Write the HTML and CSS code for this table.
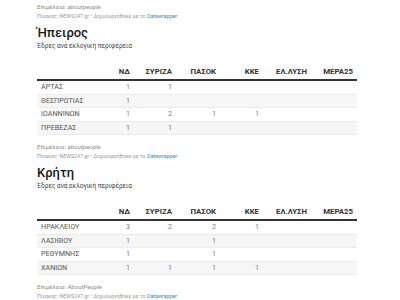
FILE: index.html
```html
<!DOCTYPE html>
<html lang="el">
<head>
<meta charset="utf-8">
<link rel="stylesheet" href="styles.css">
</head>
<body>
<div class="page">
  <div class="notes">
    <div class="byline">Επιμέλεια: aboutpeople</div>
    <div class="source">Πίνακας: NEWS247.gr • Δημιουργήθηκε με το <span class="dw">Datawrapper</span></div>
  </div>
  <div class="chart">
    <h2 class="title">Ήπειρος</h2>
    <p class="desc">Έδρες ανά εκλογική περιφέρεια</p>
    <table class="seats">
      <colgroup><col class="c-name"><col class="c-nd"><col class="c-sy"><col class="c-pa"><col class="c-kk"><col class="c-el"><col class="c-me"></colgroup>
      <thead><tr><th></th><th>ΝΔ</th><th>ΣΥΡΙΖΑ</th><th>ΠΑΣΟΚ</th><th>ΚΚΕ</th><th>ΕΛ.ΛΥΣΗ</th><th>ΜΕΡΑ25</th></tr></thead>
      <tbody>
        <tr><td>ΑΡΤΑΣ</td><td>1</td><td>1</td><td></td><td></td><td></td><td></td></tr>
        <tr><td>ΘΕΣΠΡΩΤΙΑΣ</td><td>1</td><td></td><td></td><td></td><td></td><td></td></tr>
        <tr><td>ΙΩΑΝΝΙΝΩΝ</td><td>1</td><td>2</td><td>1</td><td>1</td><td></td><td></td></tr>
        <tr><td>ΠΡΕΒΕΖΑΣ</td><td>1</td><td>1</td><td></td><td></td><td></td><td></td></tr>
      </tbody>
    </table>
  </div>
  <div class="notes">
    <div class="byline">Επιμέλεια: aboutpeople</div>
    <div class="source">Πίνακας: NEWS247.gr • Δημιουργήθηκε με το <span class="dw">Datawrapper</span></div>
  </div>
  <div class="chart">
    <h2 class="title">Κρήτη</h2>
    <p class="desc">Έδρες ανά εκλογική περιφέρεια</p>
    <table class="seats">
      <colgroup><col class="c-name"><col class="c-nd"><col class="c-sy"><col class="c-pa"><col class="c-kk"><col class="c-el"><col class="c-me"></colgroup>
      <thead><tr><th></th><th>ΝΔ</th><th>ΣΥΡΙΖΑ</th><th>ΠΑΣΟΚ</th><th>ΚΚΕ</th><th>ΕΛ.ΛΥΣΗ</th><th>ΜΕΡΑ25</th></tr></thead>
      <tbody>
        <tr><td>ΗΡΑΚΛΕΙΟΥ</td><td>3</td><td>2</td><td>2</td><td>1</td><td></td><td></td></tr>
        <tr><td>ΛΑΣΙΘΙΟΥ</td><td>1</td><td></td><td>1</td><td></td><td></td><td></td></tr>
        <tr><td>ΡΕΘΥΜΝΗΣ</td><td>1</td><td></td><td>1</td><td></td><td></td><td></td></tr>
        <tr><td>ΧΑΝΙΩΝ</td><td>1</td><td>1</td><td>1</td><td>1</td><td></td><td></td></tr>
      </tbody>
    </table>
  </div>
  <div class="notes">
    <div class="byline">Επιμέλεια: AboutPeople</div>
    <div class="source">Πίνακας: NEWS247.gr • Δημιουργήθηκε με το <span class="dw">Datawrapper</span></div>
  </div>
</div>
</body>
</html>
```
FILE: styles.css
```css
html, body {
  margin: 0;
  padding: 0;
  background: #fff;
}
body {
  font-family: Roboto, "Noto Sans", sans-serif;
  color: #333;
}
.page {
  width: 320px;
  padding: 2px 0 0 37px;
}
.notes {
  color: #8a8a8a;
}
.byline {
  font-size: 6.2px;
  line-height: 10px;
  font-style: italic;
}
.source {
  font-size: 5.3px;
  line-height: 9px;
  color: #9a9a9a;
}
.dw {
  color: #1d8fd0;
}
.title {
  margin: 4px 0 0;
  font-size: 13px;
  line-height: 16px;
  font-weight: 500;
  color: #181818;
}
.desc {
  margin: 0;
  font-size: 6.5px;
  line-height: 10px;
  color: #444;
}
.seats {
  width: 320px;
  margin: 14px 0 7px;
  border-collapse: collapse;
  table-layout: fixed;
  font-size: 7.2px;
}
.c-name { width: 55px; }
.c-nd { width: 42px; }
.c-sy { width: 42px; }
.c-pa { width: 44px; }
.c-kk { width: 43px; }
.c-el { width: 48px; }
.c-me { width: 46px; }
.seats th {
  padding: 2px 4px 2px;
  line-height: 10px;
  font-size: 7.8px;
  font-weight: 700;
  color: #333;
  text-align: right;
  border-bottom: 2px solid #333;
}
.seats td {
  height: 12.5px;
  padding: 0 4px;
  line-height: 12.5px;
  text-align: right;
  color: #808080;
  border-bottom: 1px solid #ececec;
}
.seats td:first-child {
  text-align: left;
  color: #555;
}
.seats tbody tr:nth-child(even) td {
  background: #f6f6f6;
}
```
